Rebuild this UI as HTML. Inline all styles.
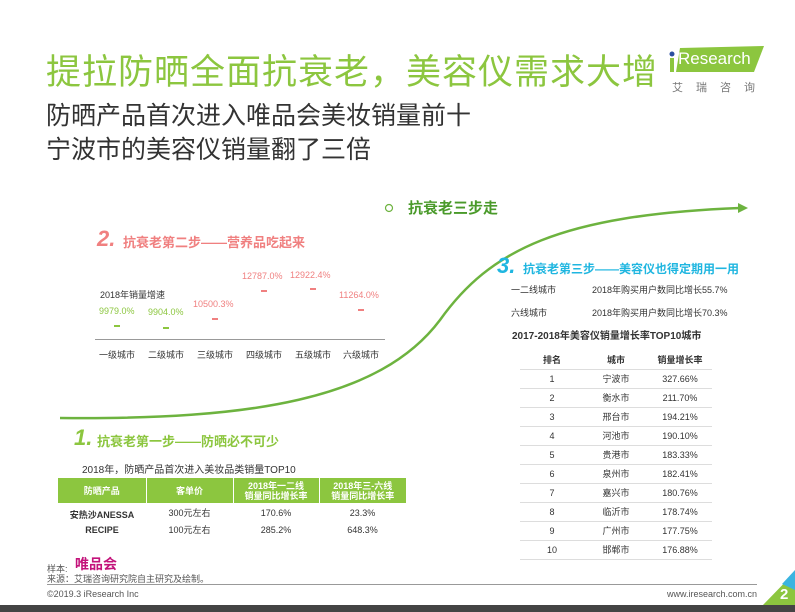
<!DOCTYPE html><html><head><meta charset="utf-8"><style>
*{margin:0;padding:0;box-sizing:border-box}
body{width:795px;height:612px;position:relative;background:#fff;font-family:"Liberation Sans","Noto Sans CJK SC",sans-serif;overflow:hidden;color:#333}
.a{position:absolute;white-space:nowrap}
.t1{left:46px;top:44px;font-size:35px;color:#8cc63f;letter-spacing:1px}
.t2{left:46px;font-size:25px;color:#333}
.pk{color:#f08080}
.gr{color:#8cc63f}
.bl{color:#1fb6e0}
table{border-collapse:collapse;position:absolute}
</style></head><body>
<div class="a t1">提拉防晒全面抗衰老，美容仪需求大增</div>
<div class="a t2" style="top:96px">防晒产品首次进入唯品会美妆销量前十</div>
<div class="a t2" style="top:130px">宁波市的美容仪销量翻了三倍</div>
<!-- logo -->
<svg class="a" style="left:668px;top:46px" width="100" height="28"><polygon points="12,2 96,0 86,26 8,26" fill="#8cc63f"/><circle cx="4" cy="8" r="2.5" fill="#2a4ea0"/><rect x="2" y="12" width="4" height="14" fill="#8cc63f"/></svg>
<div class="a" style="left:678px;top:49px;font-size:17px;color:#fff">Research</div>
<div class="a" style="left:672px;top:79px;font-size:11px;color:#777;letter-spacing:13px">艾瑞咨询</div>
<!-- curve -->
<svg class="a" style="left:0;top:0" width="795" height="612"><path d="M60,418 C250,420 380,400 440,320 C490,250 560,215 740,208" fill="none" stroke="#6db33f" stroke-width="2.5"/><polygon points="748,208 738,203 738,213" fill="#6db33f"/><circle cx="389" cy="208" r="3.5" fill="none" stroke="#6db33f" stroke-width="1.2"/></svg>
<div class="a" style="left:408px;top:197px;font-size:15px;font-weight:bold;color:#4a9a2a">抗衰老三步走</div>
<!-- step 2 -->
<div class="a pk" style="left:97px;top:226px;font-size:22px;font-weight:bold;font-style:italic">2.</div>
<div class="a pk" style="left:123px;top:232px;font-size:13px;font-weight:bold">抗衰老第二步——营养品吃起来</div>
<div class="a" style="left:100px;top:288px;font-size:9px;color:#333">2018年销量增速</div>
<div class="a gr" style="left:99px;top:306px;font-size:9px">9979.0%</div>
<div class="a gr" style="left:148px;top:307px;font-size:9px">9904.0%</div>
<div class="a pk" style="left:193px;top:299px;font-size:9px">10500.3%</div>
<div class="a pk" style="left:242px;top:271px;font-size:9px">12787.0%</div>
<div class="a pk" style="left:290px;top:270px;font-size:9px">12922.4%</div>
<div class="a pk" style="left:339px;top:290px;font-size:9px">11264.0%</div>
<div class="a" style="left:114px;top:325px;width:6px;height:2px;background:#8cc63f"></div>
<div class="a" style="left:163px;top:327px;width:6px;height:2px;background:#8cc63f"></div>
<div class="a" style="left:212px;top:318px;width:6px;height:2px;background:#f08080"></div>
<div class="a" style="left:261px;top:290px;width:6px;height:2px;background:#f08080"></div>
<div class="a" style="left:310px;top:288px;width:6px;height:2px;background:#f08080"></div>
<div class="a" style="left:358px;top:309px;width:6px;height:2px;background:#f08080"></div>
<div class="a" style="left:95px;top:339px;width:290px;height:1px;background:#999"></div>
<div class="a" style="left:99px;top:348px;font-size:9px">一级城市</div>
<div class="a" style="left:148px;top:348px;font-size:9px">二级城市</div>
<div class="a" style="left:197px;top:348px;font-size:9px">三级城市</div>
<div class="a" style="left:246px;top:348px;font-size:9px">四级城市</div>
<div class="a" style="left:295px;top:348px;font-size:9px">五级城市</div>
<div class="a" style="left:343px;top:348px;font-size:9px">六级城市</div>
<!-- step 1 -->
<div class="a gr" style="left:74px;top:425px;font-size:22px;font-weight:bold;font-style:italic">1.</div>
<div class="a gr" style="left:97px;top:431px;font-size:13px;font-weight:bold">抗衰老第一步——防晒必不可少</div>
<div class="a" style="left:82px;top:461px;font-size:10px">2018年，防晒产品首次进入美妆品类销量TOP10</div>
<table style="left:58px;top:478px;width:348px;font-size:9px;text-align:center">
<tr style="background:#8cc63f;color:#fff;font-weight:bold;height:25px;line-height:10px"><td style="width:88px;border-right:1px solid #fff">防晒产品</td><td style="width:87px;border-right:1px solid #fff">客单价</td><td style="width:86px;border-right:1px solid #fff">2018年一二线<br>销量同比增长率</td><td>2018年三-六线<br>销量同比增长率</td></tr>
<tr style="height:19px"><td style="font-weight:bold;padding-top:4px">安热沙ANESSA</td><td>300元左右</td><td>170.6%</td><td>23.3%</td></tr>
<tr style="height:15px"><td style="font-weight:bold">RECIPE</td><td>100元左右</td><td>285.2%</td><td>648.3%</td></tr>
</table>
<!-- step 3 -->
<div class="a bl" style="left:497px;top:253px;font-size:22px;font-weight:bold;font-style:italic">3.</div>
<div class="a bl" style="left:523px;top:260px;font-size:12px;font-weight:bold">抗衰老第三步——美容仪也得定期用一用</div>
<div class="a" style="left:511px;top:283px;font-size:9px">一二线城市</div>
<div class="a" style="left:592px;top:283px;font-size:9px">2018年购买用户数同比增长55.7%</div>
<div class="a" style="left:511px;top:306px;font-size:9px">六线城市</div>
<div class="a" style="left:592px;top:306px;font-size:9px">2018年购买用户数同比增长70.3%</div>
<div class="a" style="left:512px;top:327px;font-size:10px;font-weight:bold">2017-2018年美容仪销量增长率TOP10城市</div>
<table style="left:520px;top:350px;width:192px;font-size:9px;text-align:center">
<tr style="height:19px;font-weight:bold;border-bottom:1px solid #ddd"><td style="width:64px">排名</td><td style="width:64px">城市</td><td>销量增长率</td></tr>
<tr style="height:19px;border-bottom:1px solid #ddd"><td>1</td><td>宁波市</td><td>327.66%</td></tr>
<tr style="height:19px;border-bottom:1px solid #ddd"><td>2</td><td>衡水市</td><td>211.70%</td></tr>
<tr style="height:19px;border-bottom:1px solid #ddd"><td>3</td><td>邢台市</td><td>194.21%</td></tr>
<tr style="height:19px;border-bottom:1px solid #ddd"><td>4</td><td>河池市</td><td>190.10%</td></tr>
<tr style="height:19px;border-bottom:1px solid #ddd"><td>5</td><td>贵港市</td><td>183.33%</td></tr>
<tr style="height:19px;border-bottom:1px solid #ddd"><td>6</td><td>泉州市</td><td>182.41%</td></tr>
<tr style="height:19px;border-bottom:1px solid #ddd"><td>7</td><td>嘉兴市</td><td>180.76%</td></tr>
<tr style="height:19px;border-bottom:1px solid #ddd"><td>8</td><td>临沂市</td><td>178.74%</td></tr>
<tr style="height:19px;border-bottom:1px solid #ddd"><td>9</td><td>广州市</td><td>177.75%</td></tr>
<tr style="height:19px;border-bottom:1px solid #ddd"><td>10</td><td>邯郸市</td><td>176.88%</td></tr>
</table>
<!-- footer -->
<div class="a" style="left:47px;top:562px;font-size:9px;color:#555">样本:</div>
<div class="a" style="left:75px;top:554px;font-size:14px;font-weight:bold;color:#c3127a">唯品会</div>
<div class="a" style="left:47px;top:572px;font-size:9px;color:#555">来源：艾瑞咨询研究院自主研究及绘制。</div>
<div class="a" style="left:47px;top:584px;width:710px;height:1px;background:#999"></div>
<div class="a" style="left:47px;top:589px;font-size:9px;color:#555">©2019.3 iResearch Inc</div>
<div class="a" style="left:667px;top:589px;font-size:9px;color:#555">www.iresearch.com.cn</div>
<svg class="a" style="left:762px;top:570px" width="33" height="36"><polygon points="0,36 33,2 33,36" fill="#8cc63f"/><polygon points="20,14 33,0 33,20" fill="#3ab4e0"/></svg>
<div class="a" style="left:780px;top:586px;font-size:15px;color:#fff;font-weight:bold">2</div>
<div class="a" style="left:0;top:605px;width:795px;height:7px;background:#444"></div>
</body></html>
